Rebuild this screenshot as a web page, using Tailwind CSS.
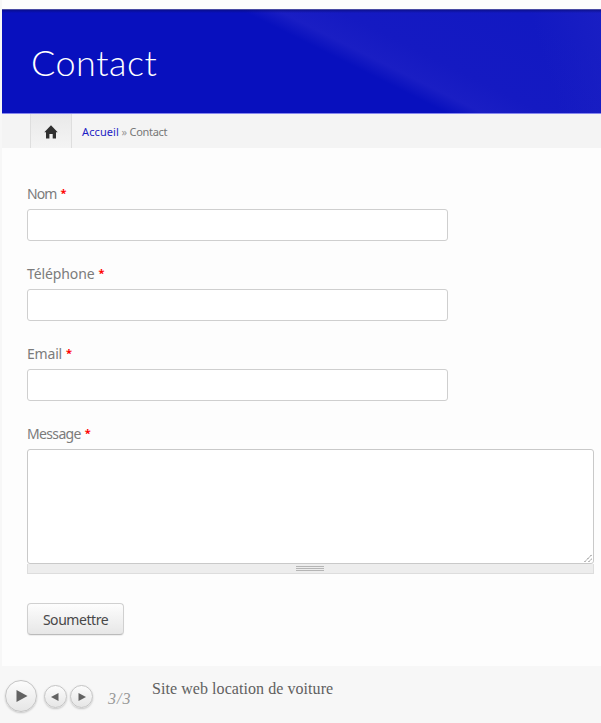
<!DOCTYPE html>
<html lang="fr">
<head>
<meta charset="utf-8">
<title>Contact</title>
<script src="https://cdn.jsdelivr.net/npm/@tailwindcss/browser@4"></script>
</head>
<body class="w-[601px] h-[723px] overflow-hidden bg-[#f7f7f7] font-['Noto_Sans','Open_Sans',sans-serif]">
<main class="ml-[2px] h-[666px] bg-[#fdfdfd] pt-[9px]">
  <header class="relative h-[105px] bg-[#0810be] border-b border-[#8586ee] overflow-hidden">
    <svg class="absolute inset-0" width="599" height="104" viewBox="0 0 599 104">
      <defs>
        <linearGradient id="ray" gradientUnits="userSpaceOnUse" x1="345" y1="54" x2="400" y2="-56">
          <stop offset="0" stop-color="#1a1ec4" stop-opacity="0"/>
          <stop offset=".13" stop-color="#1a1ec4"/>
          <stop offset=".35" stop-color="#151ac2"/>
          <stop offset="1" stop-color="#1219c2"/>
        </linearGradient>
        <linearGradient id="corner" gradientUnits="userSpaceOnUse" x1="540" y1="45" x2="640" y2="15">
          <stop offset="0" stop-color="#2024c5" stop-opacity="0"/>
          <stop offset="1" stop-color="#2024c5" stop-opacity=".8"/>
        </linearGradient>
        <linearGradient id="shade" x1="0" y1="0" x2="0" y2="1">
          <stop offset="0" stop-color="#0a0c70" stop-opacity=".8"/>
          <stop offset="1" stop-color="#0a0c70" stop-opacity="0"/>
        </linearGradient>
      </defs>
      <rect width="599" height="104" fill="url(#ray)"/>
      <rect width="599" height="104" fill="url(#corner)"/>
      <rect width="599" height="4" fill="url(#shade)"/>
      <rect width="599" height="1" fill="#4a4ca4"/>
    </svg>
    <h1 class="relative pl-[29px] pt-[30px] font-['Lato'] font-light text-[36px] leading-[46px] tracking-[0.5px] text-white">Contact</h1>
  </header>
  <nav class="flex h-[34px] bg-[#f4f4f4] pl-[28px]">
    <a class="flex w-[42px] justify-center border-x border-[#dedede] bg-linear-to-b from-[#e9e9e9] to-[#f4f4f4] pt-[11px] pr-[1px]">
      <svg width="14" height="14" viewBox="0 0 14 14"><path d="M7 .3 13.7 7.2H12V13.5H8.7V9H5.4V13.5H2V7.2H.3Z" fill="#303030"/></svg>
    </a>
    <p class="pl-[10px] text-[11px] leading-[35px] tracking-[-0.28px] whitespace-nowrap text-[#777]"><span class="text-[#1c1cc4] tracking-[0.1px]">Accueil</span> <span class="text-[#999]">»</span> Contact</p>
  </nav>
  <form class="pl-[25px] pt-[36px] text-[14px] text-[#7b7b7b]">
    <div class="h-[80px]"><label class="flex h-[25px] gap-[4px] leading-[20px] whitespace-nowrap"><span class="tracking-[-0.9px]">Nom</span><span class="text-[11px] leading-[18px] font-bold text-[#f00]">*</span></label><div class="h-[32px] w-[421px] rounded-[3px] border border-[#cfcfcf] bg-white"></div></div>
    <div class="h-[80px]"><label class="flex h-[25px] gap-[4px] leading-[20px] whitespace-nowrap"><span class="tracking-[-0.1px]">Téléphone</span><span class="text-[11px] leading-[18px] font-bold text-[#f00]">*</span></label><div class="h-[32px] w-[421px] rounded-[3px] border border-[#cfcfcf] bg-white"></div></div>
    <div class="h-[80px]"><label class="flex h-[25px] gap-[4px] leading-[20px] whitespace-nowrap"><span class="tracking-[-0.2px]">Email</span><span class="text-[11px] leading-[18px] font-bold text-[#f00]">*</span></label><div class="h-[32px] w-[421px] rounded-[3px] border border-[#cfcfcf] bg-white"></div></div>
    <div>
      <label class="flex h-[25px] gap-[4px] leading-[20px] whitespace-nowrap"><span class="tracking-[-0.65px]">Message</span><span class="text-[11px] leading-[18px] font-bold text-[#f00]">*</span></label>
      <div class="flex h-[115px] w-[567px] items-end justify-end rounded-[3px] border border-[#c9c9c9] bg-white">
        <svg width="9" height="9" viewBox="0 0 9 9" fill="none" stroke="#777" stroke-width="1"><path d="M.5 8 8 .5M4.5 8 8 4.5" stroke-dasharray="1.5 .6"/></svg>
      </div>
      <div class="flex h-[10px] w-[567px] justify-center border border-t-0 border-[#ddd] bg-[#ededed] pt-[2px] pr-[1px]">
        <div class="flex h-[5px] w-[28px] flex-col justify-between"><i class="h-px bg-[#b5b5b5]"></i><i class="h-px bg-[#b5b5b5]"></i><i class="h-px bg-[#b5b5b5]"></i></div>
      </div>
    </div>
    <button type="button" class="mt-[29px] flex h-[32px] w-[97px] items-center justify-center rounded-[4px] border border-[#d0d0d0] border-b-[#bbb] bg-linear-to-b from-[#fdfdfd] to-[#e7e7e7] text-[14px] tracking-[-0.45px] text-[#484848] shadow-[0_1px_1px_#0001]">Soumettre</button>
  </form>
</main>
<footer class="flex h-[57px] pl-[5px]">
  <div class="mt-[14px] flex h-[32px] w-[32px] items-center justify-center rounded-full border border-[#c4c4c4] bg-linear-to-b from-[#fcfcfc] to-[#e6e6e6] pl-[1px] shadow-[0_1px_2px_#0003]"><svg width="12" height="12" viewBox="0 0 12 12"><path d="M.5 0 11.5 6 .5 12Z" fill="#626262"/></svg></div>
  <div class="mt-[19px] ml-[7px] flex h-[23px] w-[23px] items-center justify-center rounded-full border border-[#c4c4c4] bg-linear-to-b from-[#fcfcfc] to-[#e6e6e6] pr-[2px] shadow-[0_1px_2px_#0003]"><svg width="8" height="8" viewBox="0 0 8 8"><path d="M7.5 0 0 4 7.5 8Z" fill="#626262"/></svg></div>
  <div class="mt-[19px] ml-[3px] flex h-[23px] w-[23px] items-center justify-center rounded-full border border-[#c4c4c4] bg-linear-to-b from-[#fcfcfc] to-[#e6e6e6] pl-[1px] shadow-[0_1px_2px_#0003]"><svg width="8" height="8" viewBox="0 0 8 8"><path d="M.5 0 8 4 .5 8Z" fill="#626262"/></svg></div>
  <span class="ml-[15px] mt-[23px] w-[44px] font-['Liberation_Serif'] text-[16px] leading-[20px] italic tracking-[1px] text-[#999]">3/3</span>
  <p class="mt-[13px] font-['Liberation_Serif'] text-[16px] leading-[20px] tracking-[0.06px] whitespace-nowrap text-[#606060]">Site web location de voiture</p>
</footer>
</body>
</html>
